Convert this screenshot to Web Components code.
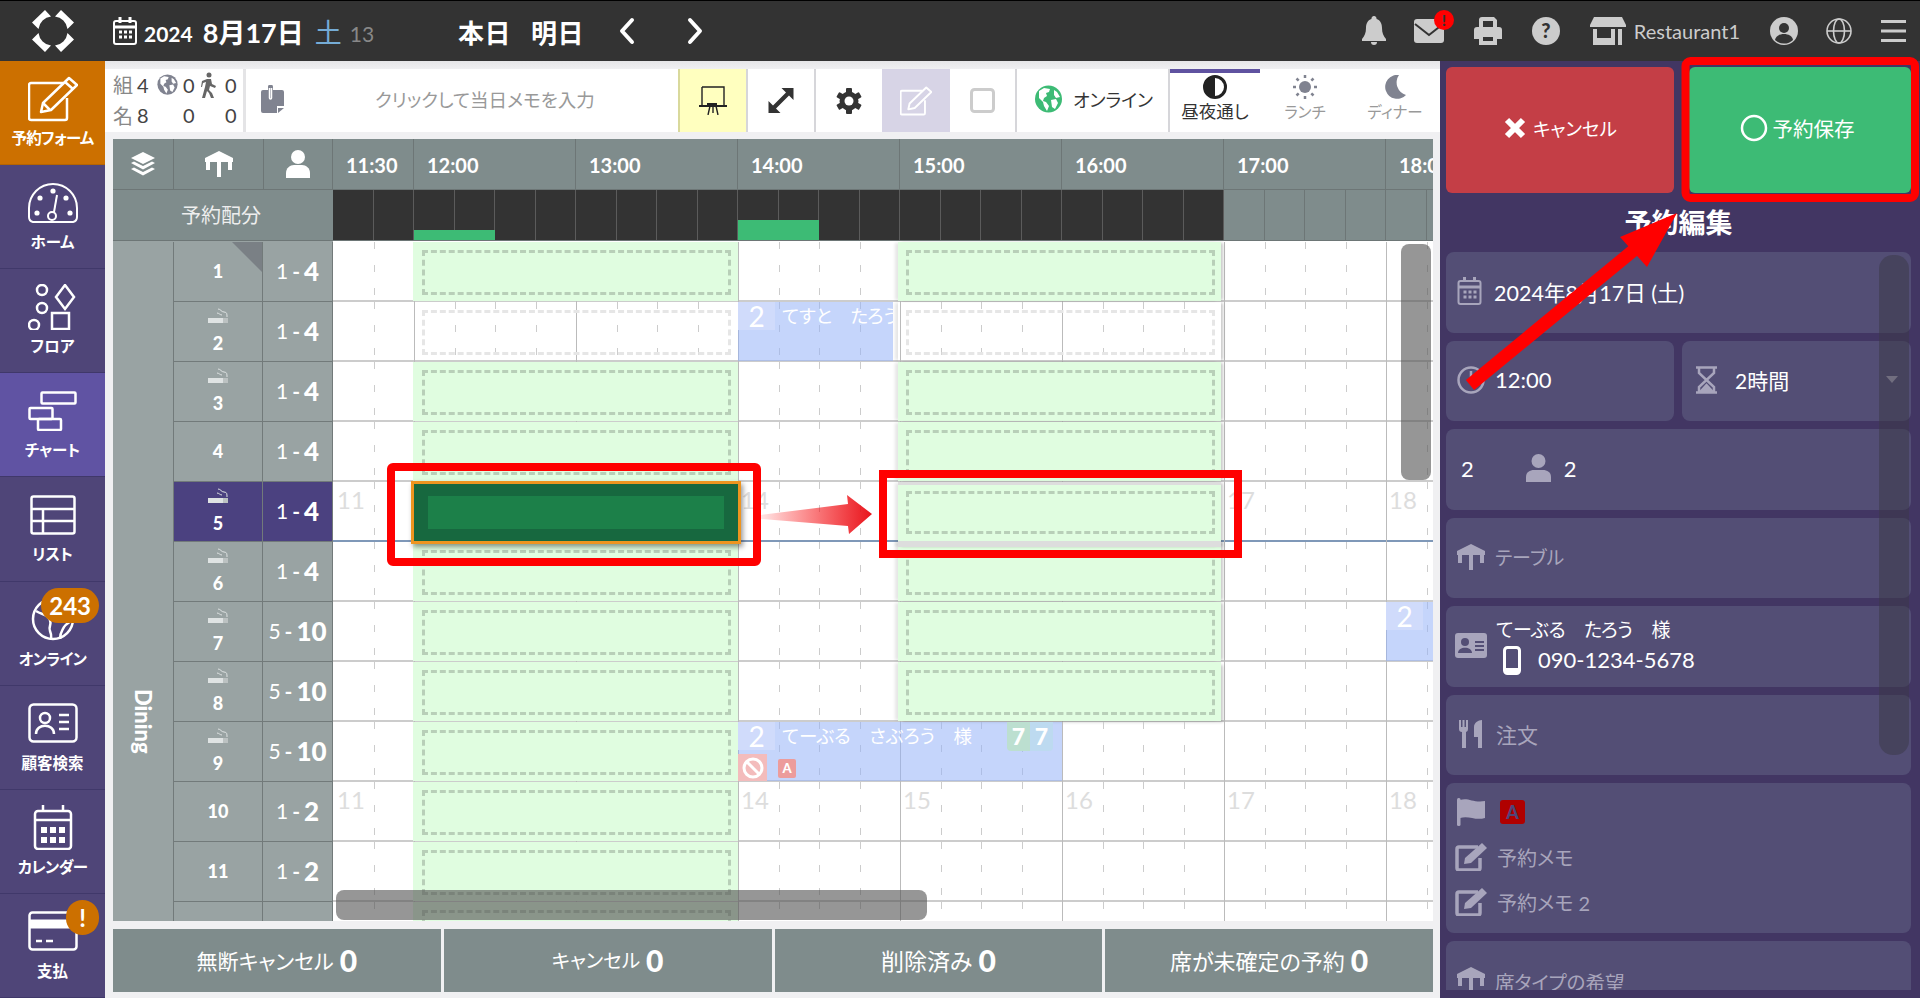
<!DOCTYPE html>
<html lang="ja">
<head>
<meta charset="utf-8">
<title>chart</title>
<style>
html,body{margin:0;height:100%;overflow:hidden;background:#f0f0f2;font-family:Lato,"Noto Sans CJK JP",sans-serif;font-feature-settings:"palt";}
</style>
</head>
<body>
<app-shell>
  <top-bar slot="top"></top-bar>
  <side-nav slot="side">
    <nav-item label="予約フォーム" tone="orange" tight><svg viewBox="0 0 50 46" width="50" height="46" fill="none" stroke="#fff" stroke-width="2.5" stroke-linejoin="round"><path d="M35 7H3a2 2 0 0 0-2 2v33a2 2 0 0 0 2 2h34a2 2 0 0 0 2-2V22"/><path d="M13 36l2-9L41 2l8 7-26 25z"/><path d="M37 6l8 7M15 27l7 7"/></svg></nav-item>
    <nav-item label="ホーム"><svg viewBox="0 0 50 40" width="50" height="40" fill="none" stroke="#fff" stroke-width="2"><path d="M5 39Q1 38 1 34V25a24 24 0 0 1 48 0v9q0 4-4 5z"/><circle cx="24" cy="33" r="4"/><path d="M26 29l3-17"/><circle cx="9" cy="30" r="1.6" fill="#fff"/><circle cx="12" cy="15" r="1.6" fill="#fff"/><circle cx="25" cy="8" r="1.6" fill="#fff"/><circle cx="38" cy="15" r="1.6" fill="#fff"/><circle cx="42" cy="30" r="1.6" fill="#fff"/></svg></nav-item>
    <nav-item label="フロア"><svg viewBox="0 0 50 46" width="50" height="46" fill="none" stroke="#fff" stroke-width="2.5"><circle cx="14" cy="6" r="5"/><circle cx="14" cy="24" r="5"/><circle cx="6" cy="41" r="5"/><path d="M37 1l9 12-9 12-9-12z"/><rect x="24" y="29" width="17" height="16"/></svg></nav-item>
    <nav-item label="チャート" tone="active"><svg viewBox="0 0 50 40" width="50" height="40" fill="none" stroke="#fff" stroke-width="2.5"><rect x="13.500" y="1.500" width="34" height="11" rx="1"/><rect x="1.500" y="17" width="23" height="11" rx="1"/><rect x="10" y="28" width="23" height="11" rx="1"/></svg></nav-item>
    <nav-item label="リスト"><svg viewBox="0 0 46 40" width="46" height="40" fill="none" stroke="#fff" stroke-width="2.5"><rect x="1.5" y="1.5" width="43" height="37" rx="2"/><path d="M1.5 14h43M1.5 26h43M13 14v24"/></svg></nav-item>
    <nav-item label="オンライン" badge="243" tight><svg viewBox="0 0 46 46" width="46" height="46" fill="none" stroke="#fff" stroke-width="2.5"><circle cx="23" cy="23" r="20"/><path d="M6 15c6 4 12 3 14 9s-2 6 0 11 1 5 1 9M30 43c0-7 2-8 4-12s8-5 9-9"/></svg></nav-item>
    <nav-item label="顧客検索"><svg viewBox="0 0 50 40" width="50" height="40" fill="none" stroke="#fff" stroke-width="2.5"><rect x="1.5" y="1.5" width="47" height="37" rx="4"/><circle cx="17" cy="15" r="5"/><path d="M8 31c0-11 18-11 18 0M31 12h10M31 19h10M31 26h10"/></svg></nav-item>
    <nav-item label="カレンダー" tight><svg viewBox="0 0 40 46" width="40" height="46" fill="none" stroke="#fff" stroke-width="2.5"><rect x="2" y="7" width="36" height="38" rx="3"/><path d="M2 16h36M10 1v7M30 1v7"/><g fill="#fff" stroke="none"><rect x="8" y="23" width="6" height="6"/><rect x="17" y="23" width="6" height="6"/><rect x="26" y="23" width="6" height="6"/><rect x="8" y="33" width="6" height="6"/><rect x="17" y="33" width="6" height="6"/><rect x="26" y="33" width="6" height="6"/></g></svg></nav-item>
    <nav-item label="支払" badge="!"><svg viewBox="0 0 50 40" width="50" height="40" fill="none" stroke="#fff" stroke-width="2.5"><rect x="1.5" y="1.5" width="47" height="37" rx="3"/><path d="M1 13h48" stroke-width="9"/><path d="M8 30h6M18 30h7"/></svg></nav-item>
  </side-nav>
  <day-toolbar slot="tools"></day-toolbar>
  <seat-chart slot="chart">
    <chart-row num="1" min="1" max="4" corner><green-slot></green-slot><green-slot at="late"></green-slot></chart-row>
    <chart-row num="2" min="1" max="4" smoke><green-slot kind="open"></green-slot><resv-bar left="405" width="155" count="2" name="てすと　たろう　様"></resv-bar><green-slot at="late" kind="open"></green-slot></chart-row>
    <chart-row num="3" min="1" max="4" smoke><green-slot></green-slot><green-slot at="late"></green-slot></chart-row>
    <chart-row num="4" min="1" max="4"><green-slot></green-slot><green-slot at="late"></green-slot></chart-row>
    <chart-row num="5" min="1" max="4" smoke selected hours="11 14 17 18"><green-slot kind="picked"></green-slot><green-slot at="late" kind="target"></green-slot></chart-row>
    <chart-row num="6" min="1" max="4" smoke><green-slot></green-slot><green-slot at="late"></green-slot></chart-row>
    <chart-row num="7" min="5" max="10" smoke><green-slot></green-slot><green-slot at="late"></green-slot><resv-bar left="1053" width="60" count="2" name=""></resv-bar></chart-row>
    <chart-row num="8" min="5" max="10" smoke><green-slot></green-slot><green-slot at="late" last></green-slot></chart-row>
    <chart-row num="9" min="5" max="10" smoke><green-slot></green-slot><resv-bar left="405" width="324" count="2" name="てーぶる　さぶろう　様" tags></resv-bar></chart-row>
    <chart-row num="10" min="1" max="2" hours="11 14 15 16 17 18"><green-slot></green-slot></chart-row>
    <chart-row num="11" min="1" max="2"><green-slot></green-slot></chart-row>
    <chart-row><green-slot></green-slot></chart-row>
  </seat-chart>
  <chart-footer slot="footer"></chart-footer>
  <edit-panel slot="panel"></edit-panel>
  <red-marks slot="marks"></red-marks>
</app-shell>

<template id="t-shell">
<style>
:host{display:grid;grid-template-columns:105px 1335px 480px;grid-template-rows:61px 71px 7px 782px 8px 63px 6px;width:1920px;height:998px;overflow:hidden;position:relative;}
.top{grid-column:1/4;grid-row:1;display:flex}
.side{grid-column:1;grid-row:2/8;display:flex}
.tools{grid-column:2;grid-row:2;display:flex}
.chart{grid-column:2;grid-row:4;padding-left:8px;padding-right:7px;display:flex}
.footer{grid-column:2;grid-row:6;padding-left:8px;padding-right:7px;display:flex}
.panel{grid-column:3;grid-row:2/8;display:flex}
</style>
<div class="top"><slot name="top"></slot></div>
<div class="side"><slot name="side"></slot></div>
<div class="tools"><slot name="tools"></slot></div>
<div class="chart"><slot name="chart"></slot></div>
<div class="footer"><slot name="footer"></slot></div>
<div class="panel"><slot name="panel"></slot></div>
<slot name="marks"></slot>
</template>

<template id="t-top">
<style>
:host{display:flex;flex:1;align-items:center;background:#333;border-top:1px solid #000;box-sizing:border-box;height:61px;color:#fff;position:relative}
.logo{width:105px;display:flex;justify-content:center}
.date{display:flex;align-items:center;margin-left:8px;width:345px}
.y{font-size:21px;font-weight:700;margin:4px 10px 0 7px}
.d{font-size:27px;font-weight:700}
.w{font-size:27px;color:#75acd6;margin-left:11px}
.n{font-size:21px;color:#888;margin:4px 0 0 8px}
.day{font-size:26px;font-weight:700;margin-right:20px;letter-spacing:.5px}
.nav{display:flex;align-items:center;gap:52px;margin-left:15px}
.right{margin-left:auto;display:flex;align-items:center;color:#ccc}
.right svg{display:block}
.shop{font-size:20px;margin:0 30px 0 8px}
.mail{position:relative;margin:0 30px 0 28px}
.alert{position:absolute;left:20px;top:-9px;width:20px;height:20px;border-radius:50%;background:#f00;color:#333;font-size:15px;font-weight:900;text-align:center;line-height:20px}
</style>
<div class="logo"><svg width="42" height="42" viewBox="0 0 42 42" fill="#fff"><path d="M0 12.500L13 0l6 6.500A14.500 14.500 0 0 0 6.500 19z"/><path d="M42 12.500L29 0l-6 6.500A14.500 14.500 0 0 1 35.500 19z"/><path d="M0 29.500L13 42l6-6.500A14.500 14.500 0 0 1 6.500 23z"/><path d="M42 29.500L29 42l-6-6.500A14.500 14.500 0 0 0 35.500 23z"/></svg></div>
<div class="date">
<svg width="24" height="28" viewBox="0 0 24 28" fill="none" stroke="#fff" stroke-width="2"><rect x="1" y="4" width="22" height="23" rx="2"/><path d="M1 10h22M7 0v6M17 0v6" stroke-width="3"/><path d="M6 15h3M11 15h3M16 15h3M6 20h3M11 20h3M16 20h3" stroke-width="3"/></svg>
<span class="y">2024</span><span class="d">8月17日</span><span class="w">土</span><span class="n">13</span>
</div>
<span class="day">本日</span><span class="day">明日</span>
<div class="nav">
<svg width="16" height="28" viewBox="0 0 16 28" fill="none" stroke="#fff" stroke-width="4" stroke-linecap="round" stroke-linejoin="round"><path d="M13 3L3 14l10 11"/></svg>
<svg width="16" height="28" viewBox="0 0 16 28" fill="none" stroke="#fff" stroke-width="4" stroke-linecap="round" stroke-linejoin="round"><path d="M3 3l10 11L3 25"/></svg>
</div>
<div class="right">
<svg width="24" height="30" viewBox="0 0 24 30" fill="#ccc"><path d="M12 0a2.5 2.5 0 0 1 2.500 3c4 1 5.500 5 5.500 9 0 5 1.500 8 4 11v2H0v-2c2.500-3 4-6 4-11 0-4 1.500-8 5.500-9A2.500 2.500 0 0 1 12 0z"/><path d="M9 26h6a3 3 0 0 1-6 0z"/></svg>
<div class="mail"><svg width="30" height="24" viewBox="0 0 30 24"><rect width="30" height="24" rx="3" fill="#ccc"/><path d="M1 5l14 11L29 5" fill="none" stroke="#333" stroke-width="2"/></svg><div class="alert">!</div></div>
<svg width="28" height="28" viewBox="0 0 28 28" fill="#ccc"><path d="M5 10V3a3 3 0 0 1 3-3h12l3 3v7h2a3 3 0 0 1 3 3v9h-5v6H5v-6H0v-9a3 3 0 0 1 3-3zm4-6v6h10V4zM9 20v4h10v-4z" fill-rule="evenodd"/></svg>
<svg style="margin:0 30px" width="28" height="28" viewBox="0 0 28 28"><circle cx="14" cy="14" r="14" fill="#ccc"/><text x="14" y="21" font-size="20" font-weight="900" text-anchor="middle" fill="#333" font-family="Lato">?</text></svg>
<svg width="36" height="28" viewBox="0 0 36 28" fill="#ccc"><path d="M4 0h28l4 8v2H0V8z"/><path d="M3 12h4v9h14v-9h4v16H3z"/><rect x="28" y="12" width="4" height="16"/></svg>
<span class="shop">Restaurant1</span>
<svg width="28" height="28" viewBox="0 0 28 28"><circle cx="14" cy="14" r="14" fill="#ccc"/><circle cx="14" cy="11" r="5" fill="#333"/><path d="M5 23c1-8 17-8 18 0a13 13 0 0 1-18 0z" fill="#333"/></svg>
<svg style="margin:0 29px 0 28px" width="26" height="26" viewBox="0 0 26 26" fill="none" stroke="#ccc" stroke-width="1.600"><circle cx="13" cy="13" r="12"/><ellipse cx="13" cy="13" rx="5.500" ry="12"/><path d="M1 13h24"/></svg>
<svg style="margin-right:14px" width="25" height="22" viewBox="0 0 25 22" fill="#ccc"><rect width="25" height="3"/><rect y="9.500" width="25" height="3"/><rect y="19" width="25" height="3"/></svg>
</div>
</template>

<template id="t-nav">
<style>
:host{display:flex;flex-direction:column;align-items:center;position:relative;height:104.2px;box-sizing:border-box;background:#4f4578;border-bottom:1px solid #40386a;color:#fff}
:host([tone=orange]){background:#cc7000;border-bottom-color:#b56400}
:host([tone=active]){background:#6053a3}
.icon{height:66px;display:flex;align-items:center;justify-content:center;padding-top:9px;box-sizing:border-box}
.label{font-size:15.500px;font-weight:700;line-height:22px;white-space:nowrap}
:host([tight]) .label{letter-spacing:-.7px}
.badge{position:absolute;display:none;right:6px;top:6px;height:35px;min-width:33px;padding:0 8px;box-sizing:border-box;border-radius:18px;background:#cc7000;font-size:24px;line-height:35px;font-weight:700;text-align:center}
</style>
<div class="icon"><slot></slot></div>
<div class="label"></div>
<div class="badge"></div>
</template>

<template id="t-side">
<style>:host{display:flex;flex-direction:column;width:105px;background:#4f4578;overflow:visible}</style>
<slot></slot>
</template>

<template id="t-tools">
<style>
:host{display:flex;flex:1;flex-direction:column;background:#f0f0f2;color:#333}
.strip{height:8px;background:linear-gradient(#e6e6e8,#f0f0f2)}
.bar{flex:1;display:flex;background:#fff}
.stats{width:130px;padding-left:8px;display:grid;grid-template-columns:24px 20px 26px 18px 24px 18px;grid-template-rows:31px 30px;align-items:center;font-size:20px;color:#444;border-right:3px solid #e4e4e6}
.stats b{font-weight:400;font-size:20px;color:#888}
.memo{flex:1;display:flex;align-items:center;padding-left:15px;color:#999;font-size:18.500px;padding-bottom:3px}
.memo span{margin-left:91px}
.cell{display:flex;align-items:center;justify-content:center;width:66px;box-sizing:border-box}
.yellow{width:68px;background:#ffffbf;border-left:2px solid #d9d99c}
.div{width:2px;background:#d6d6da;flex:none}
.pen{width:68px;background:#d7d4e6}
.check{width:65px}
.online{width:151px;gap:11px;font-size:18px;justify-content:flex-start;padding-left:18px;padding-bottom:3px}
.tab{width:90px;flex-direction:column;font-size:15.500px;color:#999;line-height:22px;justify-content:flex-start;padding-top:6px}
.tab svg{display:block;height:24px;margin-bottom:2px}
.on{color:#333;border-top:4px solid #5f52a0;padding-top:2px;width:90px;font-size:17.500px}
</style>
<div class="strip"></div>
<div class="bar">
<div class="stats">
<b>組</b><span>4</span><svg width="21" height="21" viewBox="0 0 27 28"><circle cx="13.500" cy="14" r="13.500" fill="#808390"/><path d="M4 6l5-3 6 1-1 3-3 1 1 3-3 2-1 3 3 1 3 4-2 5-3-5-1-4-4-4zM19 5l3 2 3 5-4 1-2-3zM16 15l5-1 2 4-3 6-3-2z" fill="#fff"/></svg><span>0</span>
<svg width="15" height="26" viewBox="0 0 15 26" fill="#666"><circle cx="8" cy="3" r="2.500"/><path d="M6 7h4l1 5 4 2-1 2-5-2-1 4 3 3 2 5h-3l-2-5-2-2-2 7H1l3-11 1-5-3 1-1 4H0l1-6z"/></svg><span>0</span>
<b>名</b><span>8</span><span></span><span>0</span><span></span><span>0</span>
</div>
<div class="memo">
<svg width="23" height="28" viewBox="0 0 23 28" fill="#808390"><path d="M2 5h5V2a2.500 2.500 0 0 1 5 0v3h9a2 2 0 0 1 2 2v14h-7v7H2a2 2 0 0 1-2-2V7a2 2 0 0 1 2-2z"/><path d="M17 23h6l-6 5z"/><path d="M8.500 3v10a1 1 0 0 0 2 0V3" fill="none" stroke="#fff" stroke-width="1.500"/></svg>
<span>クリックして当日メモを入力</span>
</div>
<div class="cell yellow"><svg width="28" height="29" viewBox="0 0 28 29" fill="none" stroke="#222" stroke-width="1.400"><path d="M3 1h22v18M3 1v18"/><path d="M0 20h28" stroke-width="2"/><path d="M11 20l-2 9M17 20l2 9M14 20v7"/><rect x="8" y="17" width="10" height="3" fill="#222" stroke="none"/></svg></div>
<div class="div"></div>
<div class="cell"><svg width="26" height="25" viewBox="0 0 25 25" fill="#333"><path d="M13 0H25V12L20.500 7.500 7.500 20.500 12 25H0V13L4.500 17.500 17.500 4.500z"/></svg></div>
<div class="div"></div>
<div class="cell"><svg width="26" height="26" viewBox="-13 -13 26 26"><g fill="#333"><circle r="9.500"/><rect x="-3" y="-13" width="6" height="6" rx="1"/><rect x="-3" y="-13" width="6" height="6" rx="1" transform="rotate(60)"/><rect x="-3" y="-13" width="6" height="6" rx="1" transform="rotate(120)"/><rect x="-3" y="-13" width="6" height="6" rx="1" transform="rotate(180)"/><rect x="-3" y="-13" width="6" height="6" rx="1" transform="rotate(240)"/><rect x="-3" y="-13" width="6" height="6" rx="1" transform="rotate(300)"/></g><circle r="4.500" fill="#fff"/></svg></div>
<div class="cell pen"><svg width="32" height="30" viewBox="0 0 50 46" fill="none" stroke="#fff" stroke-width="3" stroke-linejoin="round"><path d="M35 7H3a2 2 0 0 0-2 2v33a2 2 0 0 0 2 2h34a2 2 0 0 0 2-2V22"/><path d="M13 36l2-9L41 2l8 7-26 25z"/></svg></div>
<div class="cell check"><svg width="25" height="25" viewBox="0 0 25 25" fill="none" stroke="#ccc" stroke-width="3"><rect x="1.500" y="1.500" width="22" height="22" rx="3"/></svg></div>
<div class="div"></div>
<div class="cell online"><svg width="27" height="28" viewBox="0 0 27 28"><circle cx="13.500" cy="14" r="13.500" fill="#3dbb75"/><path d="M4 6l5-3 6 1-1 3-3 1 1 3-3 2-1 3 3 1 3 4-2 5-3-5-1-4-4-4zM19 5l3 2 3 5-4 1-2-3zM16 15l5-1 2 4-3 6-3-2z" fill="#fff"/></svg><span>オンライン</span></div>
<div class="div"></div>
<div class="cell tab on"><svg width="24" height="24" viewBox="0 0 24 24"><circle cx="12" cy="12" r="10.500" fill="#fff" stroke="#222" stroke-width="3"/><path d="M12 1a11 11 0 0 0 0 22z" fill="#222"/></svg><span>昼夜通し</span></div>
<div class="cell tab"><svg width="24" height="24" viewBox="0 0 24 24" fill="#808390"><circle cx="12" cy="12" r="6"/><path d="M12 0v3M12 21v3M0 12h3M21 12h3M3.500 3.500l2.200 2.200M18.300 18.300l2.200 2.200M3.500 20.500l2.200-2.200M18.300 5.700l2.200-2.200" stroke="#808390" stroke-width="2.500"/></svg><span>ランチ</span></div>
<div class="cell tab"><svg width="24" height="24" viewBox="0 0 24 24" fill="#808390"><path d="M16 0A12 12 0 1 0 23 20 13 13 0 0 1 16 0z"/></svg><span>ディナー</span></div>
</div>
</template>

<template id="t-chart">
<style>
:host{display:block;flex:1;position:relative;overflow:hidden;background:#fff;font-family:Lato,"Noto Sans CJK JP",sans-serif}
.head{display:flex;height:51px;background:#7f8c8c;border-bottom:1px solid #6d7676;box-sizing:border-box;color:#fff}
.head>div{display:flex;align-items:center;box-sizing:border-box;border-right:1px solid #6d7676;flex:none}
.c1{width:61px;justify-content:center}
.c2{width:90px;justify-content:center}
.c3{width:69px;justify-content:center}
.h{width:162px;padding-left:13px;padding-top:2px;font-size:20px;font-weight:700}
.h.half{width:81px}
.alloc{display:flex;height:50px;background:#7f8c8c;border-bottom:1px solid #6d7676;color:#eee;font-size:20px;box-sizing:content-box}
.alloc .lbl{width:220px;display:flex;align-items:center;justify-content:center;flex:none;box-sizing:border-box;padding:0 4px 2px 0}
.q{width:40.500px;flex:none;box-sizing:border-box;border-right:1px solid #6d7676;position:relative}
.q.dark{background:#333;border-right-color:#5b5b5b}
.q i{position:absolute;left:0;right:-1px;bottom:0;background:#3dbb75}
.body{display:flex;height:680px;overflow:hidden}
.area{width:60px;flex:none;background:#99a3a3;color:#fff;font-weight:900;font-size:22px;writing-mode:vertical-rl;text-align:left;padding-top:448px;box-sizing:border-box;padding-right:16px}
.rows{flex:1;min-width:0;padding-top:1px;background:linear-gradient(90deg,#99a3a3 160px,#fff 160px)}
.bar{position:absolute;background:rgba(80,80,80,.6);border-radius:8px}
.bh{left:223px;top:751px;width:591px;height:30px}
.bv{left:1288px;top:105px;width:30px;height:236px}
</style>
<div class="head">
<div class="c1"><svg width="24" height="24" viewBox="0 0 24 24" fill="#fff"><path d="M12 0l12 6-12 6L0 6z"/><path d="M0 11l3-1.500 9 4.500 9-4.500L24 11l-12 6.500z"/><path d="M0 17l3-1.500 9 4.500 9-4.500L24 17l-12 6.500z"/></svg></div>
<div class="c2"><svg width="28" height="26" viewBox="0 0 28 26" fill="#fff"><path d="M14 0l14 7v4H0V7z"/><path d="M1 11h4v8H1zM23 11h4v8h-4zM12 11h4v15h-4z"/></svg></div>
<div class="c3"><svg width="24" height="28" viewBox="0 0 24 28" fill="#fff"><circle cx="12" cy="7" r="7"/><path d="M0 28v-5c0-5 4-8 8-8h8c4 0 8 3 8 8v5z"/></svg></div>
<div class="h half">11:30</div>
<div class="h">12:00</div><div class="h">13:00</div><div class="h">14:00</div><div class="h">15:00</div><div class="h">16:00</div><div class="h">17:00</div><div class="h">18:00</div>
</div>
<div class="alloc"><div class="lbl">予約配分</div></div>
<div class="body"><div class="area">Dining</div><div class="rows"><slot></slot></div></div>
<div class="bar bh"></div><div class="bar bv"></div>
</template>

<template id="t-row">
<style>
:host{display:block;height:60px;position:relative}
:host([selected]){z-index:2}
.row{display:flex;height:60px;color:#fff}
.name{width:90px;flex:none;box-sizing:border-box;background:#99a3a3;border-left:1px solid #727a7a;border-bottom:1px solid #727a7a;border-right:1px solid #727a7a;display:flex;flex-direction:column;align-items:center;justify-content:center;font-weight:900;font-size:18px;position:relative;line-height:20px;padding-bottom:2px}
.name.sm{justify-content:flex-start;padding:6px 0 0}
.cap{width:70px;flex:none;box-sizing:border-box;background:#99a3a3;border-bottom:1px solid #727a7a;border-right:1px solid #727a7a;display:flex;align-items:center;justify-content:center;font-size:21px;white-space:nowrap;padding-bottom:2px}
.cap b{font-size:26px;font-weight:900}
.cap u{text-decoration:none;font-weight:700;margin:0 4px}
:host([selected]) .name,:host([selected]) .cap{background:#4b4180}
.corner{position:absolute;right:0;top:0;width:0;height:0;border-top:30px solid #7a8085;border-left:30px solid transparent}
.smoke{display:block;margin-bottom:10px}
.time{flex:1;position:relative;overflow:visible;border-bottom:2px solid #ccc;box-sizing:border-box;height:60px}
:host([selected]) .time{border-bottom-color:#7f98b8}
.time svg{position:absolute;left:0;top:0}
.num{position:absolute;top:3px;font-size:24px;color:#ddd;line-height:30px}
</style>
<div class="row">
<div class="name"></div>
<div class="cap"></div>
<div class="time"><slot></slot></div>
</div>
</template>

<template id="t-slot">
<style>
:host{display:block;position:absolute;left:80px;top:0;width:325px;height:59px;box-sizing:border-box;background:#e0fde0;padding:8px 7px 0 9px}
:host([at=late]){left:565px;width:323px;padding:8px 6px 0 8px;box-shadow:3px 0 3px -1px rgba(0,0,0,.22),-4px 0 3px -1px rgba(0,0,0,.1)}
:host([last]){box-shadow:3px 2px 3px -1px rgba(0,0,0,.22),-4px 0 3px -1px rgba(0,0,0,.1)}
:host([kind=open]){background:transparent}
:host([kind=open][at=late]){background:transparent}
:host([kind=target]){height:65px;border-top:3px solid #ddd;border-bottom:6px solid #ddd;padding-top:6px}
:host([kind=picked]){left:78px;width:330px;top:-1px;height:63px;background:#17683f;border:3px solid #ee9520;box-shadow:2px 3px 5px rgba(0,0,0,.4);padding:12px 14px}
.in{box-sizing:border-box;border:3px dashed #b8cfb8;height:45px}
:host([kind=open]) .in{border-color:#e6e6e6}
:host([kind=target]) .in{height:43px}
:host([kind=picked]) .in{border:0;background:#1c8049;height:33px}
</style>
<div class="in"></div>
</template>

<template id="t-resv">
<style>
:host{display:block;position:absolute;top:0;height:59px;background:rgba(150,178,248,.55);color:#fff;overflow:hidden;white-space:nowrap;font-size:18.500px}
.top{display:flex;align-items:flex-start;height:30px}
.cnt{width:37px;height:28px;background:#d0dbfb;font-size:28px;text-align:center;line-height:28px;flex:none}
.nm{margin-left:7px;line-height:28px}
.tg{position:absolute;left:269px;top:0;display:flex;font-weight:900;font-size:23px;line-height:29px;height:29px;text-align:center}
.tg span{width:23px;background:#bcdfd0}
.tg span+span{background:#bddaf0;border-radius:0 0 4px 0}
.tg span:first-child{border-radius:0 0 0 4px}
.low{position:absolute;left:0;top:32px;height:27px;display:flex}
.no{width:29px;background:#f3bcbc;display:flex;align-items:center;justify-content:center}
.a{margin-left:11px;margin-top:5px;width:18px;height:19px;background:#ec9c9c;border-radius:2px;font-size:13px;font-weight:900;line-height:19px;text-align:center}
</style>
<div class="top"><div class="cnt"></div><div class="nm"></div></div>
</template>

<template id="t-foot">
<style>
:host{display:grid;flex:1;grid-template-columns:repeat(4,1fr);gap:3px;color:#fff;font-size:21px}
div{background:#7f8c8c;display:flex;align-items:center;justify-content:center;gap:6px;padding-bottom:2px}
b{font-size:30px;font-weight:900}
</style>
<div>無断キャンセル<b>0</b></div>
<div style="font-size:19.500px">キャンセル<b>0</b></div>
<div style="font-size:23px">削除済み<b>0</b></div>
<div style="font-size:22px">席が未確定の予約<b>0</b></div>
</template>

<template id="t-card">
<style>
:host{display:flex;flex:none;align-items:center;box-sizing:border-box;background:#534e75;border-radius:8px;min-height:80.500px;padding-left:11px;padding-bottom:2px;color:#fff;font-size:21px;gap:10px}
:host([dim]){color:#a8a5bc}
::slotted(svg){flex:none}
</style>
<slot></slot>
</template>

<template id="t-panel">
<style>
:host{display:block;flex:1;background:#423663;position:relative;height:937px;overflow:hidden;color:#fff}
.btns{display:grid;grid-template-columns:228px 222px;gap:15px;padding:6px 0 0 6px;}
.btn{height:126px;border-radius:6px;display:flex;align-items:center;justify-content:center;gap:6px;font-size:18.500px;color:#fff;box-sizing:border-box;padding-bottom:4px}
.red{background:#c43e46}
.green{background:#3dbb75;font-size:20.500px;gap:5px;padding-right:6px}
h2{margin:0;text-align:center;font-size:27px;line-height:34px;padding:13px 0 12px;margin-left:-3px;font-weight:700}
.list{display:flex;flex-direction:column;gap:8px;padding:0 9px 0 6px;height:738px;overflow:hidden}
.two{display:grid;grid-template-columns:228px 229px;gap:8px;flex:none}
.stack{display:flex;flex-direction:column;line-height:30px}
.line{display:flex;align-items:center;gap:10px;height:45px;font-size:20px}
.sb{position:absolute;left:439px;top:194px;width:30px;height:500px;border-radius:14px;background:rgba(58,56,70,.5)}
.caret{margin-left:auto;margin-right:13px}
.a{width:25px;height:24px;background:#b00000;border-radius:3px;color:#4f4578;text-align:center;font-weight:900;font-size:18px;line-height:24px;margin-left:5px}
</style>
<div class="btns">
<div class="btn red"><svg width="24" height="24" viewBox="0 0 24 24"><path d="M4 4l16 16M20 4L4 20" stroke="#fff" stroke-width="6"/></svg><span>キャンセル</span></div>
<div class="btn green"><svg width="28" height="28" viewBox="0 0 28 28"><circle cx="14" cy="14" r="12" fill="none" stroke="#fff" stroke-width="2.500"/></svg><span>予約保存</span></div>
</div>
<h2>予約編集</h2>
<div class="list">
<info-card><svg width="25" height="28" viewBox="0 0 24 28" fill="none" stroke="#a8a5bc" stroke-width="2"><rect x="1" y="4" width="22" height="23" rx="2"/><path d="M1 10h22" stroke-width="3"/><path d="M7 0v5M17 0v5" stroke-width="3"/><path d="M6 15h3M11 15h3M16 15h3M6 20h3M11 20h3M16 20h3" stroke-width="3"/></svg><span style="font-size:21.500px;margin-left:2px">2024年8月17日 (土)</span></info-card>
<div class="two">
<info-card><svg width="28" height="28" viewBox="0 0 28 28" fill="none" stroke="#a8a5bc" stroke-width="2.500"><circle cx="14" cy="14" r="12.500"/><path d="M14 5v10"/></svg><span style="font-size:22px">12:00</span></info-card>
<info-card style="padding-left:14px;gap:18px"><svg width="21" height="28" viewBox="0 0 21 28" fill="none" stroke="#a8a5bc" stroke-width="2.500"><path d="M0 1.500h21M0 26.500h21M3 2v5l7.500 7L3 21v5M18 2v5l-7.500 7 7.500 7v5"/><path d="M5 25l5.500-6 5.500 6z" fill="#a8a5bc"/></svg><span>2時間</span><svg class="caret" width="12" height="7" viewBox="0 0 12 7" fill="#a8a5b8"><path d="M0 0h12L6 7z"/></svg></info-card>
</div>
<info-card style="gap:0;padding-left:15px;font-size:22px"><span>2</span><svg style="margin:0 13px 0 52px" width="25" height="28" viewBox="0 0 25 28" fill="#a8a5bc"><circle cx="12.500" cy="7" r="7"/><path d="M0 28v-5c0-5 4-7 8-7h9c4 0 8 2 8 7v5z"/></svg><span>2</span></info-card>
<info-card dim style="font-size:19px"><svg width="28" height="26" viewBox="0 0 28 26" fill="#a8a5bc"><path d="M14 0l14 7v4H0V7z"/><path d="M1 11h4v8H1zM23 11h4v8h-4zM12 11h4v15h-4z"/></svg><span>テーブル</span></info-card>
<info-card style="padding-left:9px;gap:9px"><svg width="32" height="25" viewBox="0 0 32 25"><rect width="32" height="25" rx="3" fill="#a8a5bc"/><circle cx="10" cy="9" r="4" fill="#534e75"/><path d="M3 20c0-7 14-7 14 0z" fill="#534e75"/><path d="M20 9h9M20 13h9M20 17h9" stroke="#534e75" stroke-width="2"/></svg>
<div class="stack"><span style="font-size:19px;letter-spacing:-.3px">てーぶる　たろう　様</span><span style="display:flex;align-items:center;gap:17px;margin-left:7px;font-size:22px"><svg width="18" height="29" viewBox="0 0 18 29"><rect x="1.500" y="1.500" width="15" height="26" rx="3" fill="none" stroke="#fff" stroke-width="3"/><rect x="2" y="22" width="14" height="6" fill="#fff"/></svg>090-1234-5678</span></div></info-card>
<info-card dim style="padding-left:13px;gap:14px"><svg width="23" height="28" viewBox="0 0 23 28" fill="#a8a5bc"><path d="M0 0h2v7h1.500V0h2v7H7V0h2v9a3 3 0 0 1-2 3v16H3V12a3 3 0 0 1-3-3z"/><path d="M23 0v28h-4V17h-4V7c0-4 4-7 8-7z"/></svg><span>注文</span></info-card>
<info-card dim style="display:block;padding:6.500px 0 8.500px 9px"><div class="line"><svg style="margin-left:2px" width="28" height="28" viewBox="0 0 28 28" fill="#a8a5bc"><rect y="0" width="3.500" height="28" rx="1.500"/><path d="M3 2c8-3 13 3 25 1v17c-10 3-16-3-25 0z"/></svg><span class="a">A</span></div><div class="line"><svg width="32" height="28" viewBox="0 0 32 28"><path d="M23 4H4a2 2 0 0 0-2 2v19a2 2 0 0 0 2 2h19a2 2 0 0 0 2-2V15" fill="none" stroke="#a8a5bc" stroke-width="3.500"/><path d="M9 21l1-6L27 0l5 5-16 15z" fill="#a8a5bc"/></svg><span>予約メモ</span></div><div class="line"><svg width="32" height="28" viewBox="0 0 32 28"><path d="M23 4H4a2 2 0 0 0-2 2v19a2 2 0 0 0 2 2h19a2 2 0 0 0 2-2V15" fill="none" stroke="#a8a5bc" stroke-width="3.500"/><path d="M9 21l1-6L27 0l5 5-16 15z" fill="#a8a5bc"/></svg><span>予約メモ 2</span></div></info-card>
<info-card dim style="padding-top:26px;align-items:flex-start;font-size:19.500px"><svg width="28" height="26" viewBox="0 0 28 26" fill="#a8a5bc"><path d="M14 0l14 7v4H0V7z"/><path d="M1 11h4v8H1zM23 11h4v8h-4zM12 11h4v15h-4z"/></svg><span>席タイプの希望</span></info-card>
</div>
<div class="sb"></div>
</template>

<template id="t-marks">
<style>
:host{position:absolute;left:0;top:0;width:1920px;height:998px;pointer-events:none;z-index:5}
svg{display:block}
</style>
<svg width="1920" height="998" viewBox="0 0 1920 998">
<defs><linearGradient id="fade" x1="0" x2="1"><stop offset="0" stop-color="#f00" stop-opacity=".1"/><stop offset="1" stop-color="#e8141c"/></linearGradient></defs>
<g fill="none" stroke="#f00" stroke-width="8">
<rect x="391" y="467" width="366" height="95" rx="2"/>
<rect x="883" y="474" width="355" height="80"/>
<rect x="1685.500" y="61" width="229.500" height="137" rx="5"/>
</g>
<path d="M761 515L848 504 847 495 872 514 849 534 848 526 761 519z" fill="url(#fade)"/>
<path d="M1470 385L1640 245" stroke="#f00" stroke-width="13"/>
<path d="M1677 213L1620 237 1647 267z" fill="#f00"/>
</svg>
</template>

<script>
// clone a template into an open shadow root
function mount(el, id){
  var root = el.attachShadow({mode:"open"});
  root.appendChild(document.getElementById(id).content.cloneNode(true));
  return root;
}
function plain(tag, id, after){
  customElements.define(tag, class extends HTMLElement{
    constructor(){ super(); mount(this, id); }
    connectedCallback(){ if(after) after.call(this, this.shadowRoot); }
  });
}

plain("app-shell","t-shell");
plain("top-bar","t-top");
plain("side-nav","t-side");
plain("day-toolbar","t-tools");
plain("chart-footer","t-foot");
plain("info-card","t-card");
plain("edit-panel","t-panel");
plain("red-marks","t-marks");
plain("green-slot","t-slot");

plain("nav-item","t-nav",function(r){
  r.querySelector(".label").textContent = this.getAttribute("label");
  var b = this.getAttribute("badge");
  if(b){ var e = r.querySelector(".badge"); e.textContent = b; e.style.display = "block"; }
});

plain("seat-chart","t-chart",function(r){
  var alloc = r.querySelector(".alloc");
  for(var i=0;i<28;i++){
    var q = document.createElement("div");
    q.className = i<22 ? "q dark" : "q";
    var h = (i==2||i==3) ? 10 : (i==10||i==11) ? 20 : 0;
    if(h){ var g = document.createElement("i"); g.style.height = h+"px"; q.appendChild(g); }
    alloc.appendChild(q);
  }
});

plain("chart-row","t-row",function(r){
  var name = r.querySelector(".name"), cap = r.querySelector(".cap"), time = r.querySelector(".time");
  var num = this.getAttribute("num");
  if(num){
    var html = "";
    if(this.hasAttribute("smoke")){
      name.classList.add("sm");
      html += '<svg class="smoke" width="20" height="15" viewBox="0 0 20 15" fill="none"><rect x="0" y="10" width="15" height="5" fill="#dfe3e3"/><rect x="15" y="10" width="5" height="5" fill="#bcc2c2"/><path d="M10 1c3 0 3 3 6 3 3 0 3 2 3 5M9 5c2 0 3 2 5 2" stroke="#dfe3e3" stroke-width="1"/></svg>';
    }
    html += num;
    if(this.hasAttribute("corner")) html += '<div class="corner"></div>';
    name.innerHTML = html;
    cap.innerHTML = this.getAttribute("min")+"<u>-</u><b>"+this.getAttribute("max")+"</b>";
  }
  // quarter ticks and hour lines behind the bookings
  var s = '<svg width="1100" height="60">';
  for(var n=1;n<28;n++){
    var x = Math.round(n*40.5);
    if((n-2)%4==0) s += '<rect x="'+x+'" width="1" height="60" fill="#bbb"/>';
    else s += '<path d="M'+(x+.5)+' 0V60" stroke="#ccc" stroke-dasharray="7 16"/>';
  }
  s += "</svg>";
  var t = document.createElement("div");
  t.innerHTML = s;
  time.insertBefore(t.firstChild, time.firstChild);
  (this.getAttribute("hours")||"").split(" ").forEach(function(h){
    if(!h) return;
    var sp = document.createElement("span");
    sp.className = "num"; sp.textContent = h;
    sp.style.left = (h=="11" ? 4 : 84+162*(h-12))+"px";
    time.insertBefore(sp, time.lastElementChild);
  });
});

plain("resv-bar","t-resv",function(r){
  this.style.left = this.getAttribute("left")+"px";
  this.style.width = this.getAttribute("width")+"px";
  r.querySelector(".cnt").textContent = this.getAttribute("count");
  r.querySelector(".nm").textContent = this.getAttribute("name");
  if(this.hasAttribute("tags")){
    var d = document.createElement("div");
    d.innerHTML = '<div class="tg"><span>7</span><span>7</span></div><div class="low"><div class="no"><svg width="22" height="22" viewBox="0 0 22 22" fill="none" stroke="#fff" stroke-width="3"><circle cx="11" cy="11" r="9"/><path d="M5 5l12 12"/></svg></div><div class="a">A</div></div>';
    while(d.firstChild) r.appendChild(d.firstChild);
  }
});
</script>
</body>
</html>
